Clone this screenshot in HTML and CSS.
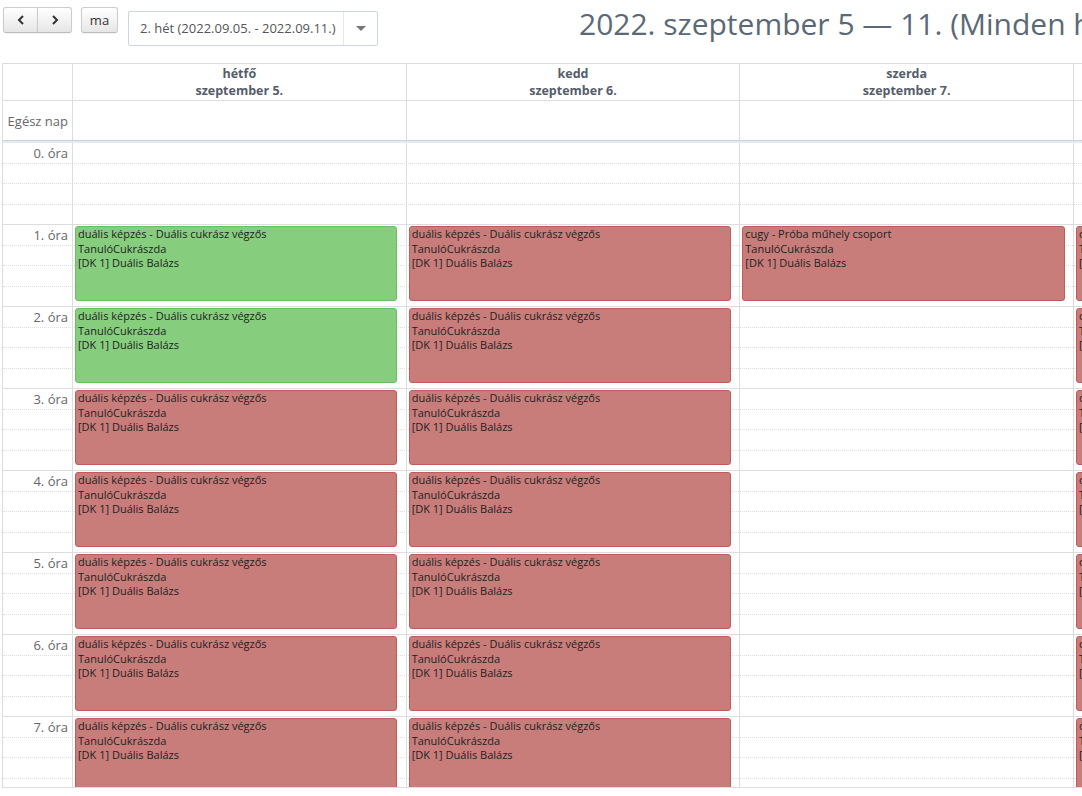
FILE: index.html
```html
<!DOCTYPE html>
<html lang="hu">
<head>
    <meta charset="UTF-8">
    <title>Órarend - heti nézet</title>
    <link rel="stylesheet" href="styles.css">
</head>
<body>
    <div class="toolbar">
        <div class="btn-group">
            <button class="btn btn-nav" title="előző">
                <svg width="8" height="10" viewBox="0 0 8 10"><polyline points="6,1 2,5 6,9" fill="none" stroke="#333" stroke-width="2"/></svg>
            </button>
            <button class="btn btn-nav" title="következő">
                <svg width="8" height="10" viewBox="0 0 8 10"><polyline points="2,1 6,5 2,9" fill="none" stroke="#333" stroke-width="2"/></svg>
            </button>
        </div>
        <button class="btn btn-today">ma</button>
        <div class="week-select">
            <span class="week-label">2. hét (2022.09.05. - 2022.09.11.)</span>
            <span class="week-caret"><span class="caret"></span></span>
        </div>
        <h2 class="title">2022. szeptember 5 — 11. (Minden hét)</h2>
    </div>

    <div class="cal">
        <div class="row head">
            <div class="cell"></div>
            <div class="cell day-head">hétfő<br>szeptember 5.</div>
            <div class="cell day-head">kedd<br>szeptember 6.</div>
            <div class="cell day-head">szerda<br>szeptember 7.</div>
            <div class="cell day-head">csütörtök<br>szeptember 8.</div>
            <div class="cell day-head">péntek<br>szeptember 9.</div>
            <div class="cell day-head">szombat<br>szeptember 10.</div>
            <div class="cell day-head">vasárnap<br>szeptember 11.</div>
        </div>
        <div class="row allday">
            <div class="cell allday-label">Egész nap</div>
            <div class="cell"></div>
            <div class="cell"></div>
            <div class="cell"></div>
            <div class="cell"></div>
            <div class="cell"></div>
            <div class="cell"></div>
            <div class="cell"></div>
        </div>
        <div class="divider"></div>

        <div class="body">
            <div class="slots">
                <div class="hour"><div class="slot"><span class="hour-label">0. óra</span></div><div class="slot"></div><div class="slot"></div><div class="slot"></div></div>
                <div class="hour"><div class="slot"><span class="hour-label">1. óra</span></div><div class="slot"></div><div class="slot"></div><div class="slot"></div></div>
                <div class="hour"><div class="slot"><span class="hour-label">2. óra</span></div><div class="slot"></div><div class="slot"></div><div class="slot"></div></div>
                <div class="hour"><div class="slot"><span class="hour-label">3. óra</span></div><div class="slot"></div><div class="slot"></div><div class="slot"></div></div>
                <div class="hour"><div class="slot"><span class="hour-label">4. óra</span></div><div class="slot"></div><div class="slot"></div><div class="slot"></div></div>
                <div class="hour"><div class="slot"><span class="hour-label">5. óra</span></div><div class="slot"></div><div class="slot"></div><div class="slot"></div></div>
                <div class="hour"><div class="slot"><span class="hour-label">6. óra</span></div><div class="slot"></div><div class="slot"></div><div class="slot"></div></div>
                <div class="hour"><div class="slot"><span class="hour-label">7. óra</span></div><div class="slot"></div><div class="slot"></div><div class="slot"></div></div>
            </div>

            <div class="cols">
                <div class="col time-col"></div>
                <div class="col">
                    <div class="ev ev-green">duális képzés - Duális cukrász végzős<br>TanulóCukrászda<br>[DK 1] Duális Balázs</div>
                    <div class="ev ev-green">duális képzés - Duális cukrász végzős<br>TanulóCukrászda<br>[DK 1] Duális Balázs</div>
                    <div class="ev ev-red">duális képzés - Duális cukrász végzős<br>TanulóCukrászda<br>[DK 1] Duális Balázs</div>
                    <div class="ev ev-red">duális képzés - Duális cukrász végzős<br>TanulóCukrászda<br>[DK 1] Duális Balázs</div>
                    <div class="ev ev-red">duális képzés - Duális cukrász végzős<br>TanulóCukrászda<br>[DK 1] Duális Balázs</div>
                    <div class="ev ev-red">duális képzés - Duális cukrász végzős<br>TanulóCukrászda<br>[DK 1] Duális Balázs</div>
                    <div class="ev ev-red">duális képzés - Duális cukrász végzős<br>TanulóCukrászda<br>[DK 1] Duális Balázs</div>
                </div>
                <div class="col">
                    <div class="ev ev-red">duális képzés - Duális cukrász végzős<br>TanulóCukrászda<br>[DK 1] Duális Balázs</div>
                    <div class="ev ev-red">duális képzés - Duális cukrász végzős<br>TanulóCukrászda<br>[DK 1] Duális Balázs</div>
                    <div class="ev ev-red">duális képzés - Duális cukrász végzős<br>TanulóCukrászda<br>[DK 1] Duális Balázs</div>
                    <div class="ev ev-red">duális képzés - Duális cukrász végzős<br>TanulóCukrászda<br>[DK 1] Duális Balázs</div>
                    <div class="ev ev-red">duális képzés - Duális cukrász végzős<br>TanulóCukrászda<br>[DK 1] Duális Balázs</div>
                    <div class="ev ev-red">duális képzés - Duális cukrász végzős<br>TanulóCukrászda<br>[DK 1] Duális Balázs</div>
                    <div class="ev ev-red">duális képzés - Duális cukrász végzős<br>TanulóCukrászda<br>[DK 1] Duális Balázs</div>
                </div>
                <div class="col">
                    <div class="ev ev-red">cugy - Próba műhely csoport<br>TanulóCukrászda<br>[DK 1] Duális Balázs</div>
                </div>
                <div class="col">
                    <div class="ev ev-red">duális képzés - Duális cukrász végzős<br>TanulóCukrászda<br>[DK 1] Duális Balázs</div>
                    <div class="ev ev-red">duális képzés - Duális cukrász végzős<br>TanulóCukrászda<br>[DK 1] Duális Balázs</div>
                    <div class="ev ev-red">duális képzés - Duális cukrász végzős<br>TanulóCukrászda<br>[DK 1] Duális Balázs</div>
                    <div class="ev ev-red">duális képzés - Duális cukrász végzős<br>TanulóCukrászda<br>[DK 1] Duális Balázs</div>
                    <div class="ev ev-red">duális képzés - Duális cukrász végzős<br>TanulóCukrászda<br>[DK 1] Duális Balázs</div>
                    <div class="ev ev-red">duális képzés - Duális cukrász végzős<br>TanulóCukrászda<br>[DK 1] Duális Balázs</div>
                    <div class="ev ev-red">duális képzés - Duális cukrász végzős<br>TanulóCukrászda<br>[DK 1] Duális Balázs</div>
                </div>
                <div class="col"></div>
                <div class="col"></div>
                <div class="col"></div>
            </div>
        </div>
    </div>
</body>
</html>
```

FILE: styles.css
```css
body {
    margin: 0;
    font-family: 'Open Sans', 'Liberation Sans', sans-serif;
    color: #333;
    background-color: #fff;
    overflow: hidden;
}
.toolbar {
    display: flex;
    align-items: flex-start;
    height: 63px;
    padding-left: 3px;
    white-space: nowrap;
}
.toolbar > * {
    flex-shrink: 0;
}
.btn-group {
    display: flex;
    margin-top: 7px;
}
.btn {
    height: 26px;
    margin: 0;
    padding: 0;
    border: 1px solid #ccc;
    border-bottom-color: #bbb;
    border-radius: 3px;
    background: linear-gradient(#fff, #e6e6e6);
    box-shadow: inset 0 1px 0 rgba(255, 255, 255, 0.3), 0 1px 2px rgba(0, 0, 0, 0.05);
    font-family: inherit;
    color: #333;
    cursor: pointer;
}
.btn-nav {
    width: 35px;
    display: flex;
    align-items: center;
    justify-content: center;
}
.btn-nav:first-child {
    border-radius: 3px 0 0 3px;
}
.btn-nav:last-child {
    border-radius: 0 3px 3px 0;
    margin-left: -1px;
}
.btn-today {
    width: 37px;
    margin-top: 7px;
    margin-left: 9px;
    font-size: 13px;
    line-height: 22px;
}
.week-select {
    display: flex;
    width: 250px;
    height: 35px;
    margin-top: 11px;
    margin-left: 10px;
    box-sizing: border-box;
    border: 1px solid #cdd6df;
    border-radius: 2px;
    background-color: #fff;
}
.week-label {
    flex: 1;
    padding-left: 11px;
    font-size: 13px;
    line-height: 33px;
    color: #555;
}
.week-caret {
    width: 33px;
    border-left: 1px solid #e4e8ec;
    display: flex;
    align-items: center;
    justify-content: center;
}
.caret {
    width: 0;
    height: 0;
    border-left: 5px solid transparent;
    border-right: 5px solid transparent;
    border-top: 5px solid #777;
}
.title {
    margin: 3px 0 0 201px;
    font-size: 30px;
    font-weight: 400;
    color: #5b6876;
}
.cal {
    margin-left: 2px;
    width: max-content;
    border-left: 1px solid #ddd;
    border-top: 1px solid #ddd;
}
.row,
.cols {
    display: grid;
    grid-template-columns: 70px repeat(7, 333.67px);
}
.cell {
    box-sizing: border-box;
    border-right: 1px solid #ddd;
    border-bottom: 1px solid #ddd;
}
.head .cell {
    height: 37px;
}
.day-head {
    padding-top: 1px;
    text-align: center;
    font-size: 12.5px;
    font-weight: 700;
    line-height: 17px;
    color: #555d69;
}
.allday .cell {
    height: 39px;
    border-bottom: none;
}
.allday-label {
    padding-right: 4px;
    text-align: right;
    font-size: 13px;
    line-height: 40px;
    color: #666;
}
.divider {
    height: 2px;
    border-top: 1px solid #c9d3dc;
    background-color: #e4eaef;
}
.body {
    position: relative;
    height: 644px;
    overflow: hidden;
    border-bottom: 1px solid #ddd;
}
.slot {
    box-sizing: border-box;
    height: 21px;
    border-bottom: 1px dotted #ddd;
}
.slot:nth-child(2) {
    height: 20px;
}
.slot:last-child {
    height: 20px;
    border-bottom: 1px solid #ddd;
}
.hour-label {
    display: block;
    width: 65px;
    text-align: right;
    font-size: 13px;
    line-height: 21px;
    color: #666;
}
.cols {
    position: absolute;
    top: 0;
    left: 0;
    bottom: 0;
}
.col {
    box-sizing: border-box;
    border-right: 1px solid #ddd;
    padding-top: 83px;
}
.ev {
    box-sizing: border-box;
    height: 75px;
    margin: 0 2.5% 7px 2px;
    padding: 0 2px;
    border: 1px solid;
    border-radius: 3px;
    font-size: 11px;
    line-height: 14.5px;
    color: #222;
    white-space: nowrap;
    overflow: hidden;
}
.ev-green {
    background-color: #86ce7e;
    border-color: #66c05e;
}
.ev-red {
    background-color: #c87d7a;
    border-color: #c2595a;
}
```
